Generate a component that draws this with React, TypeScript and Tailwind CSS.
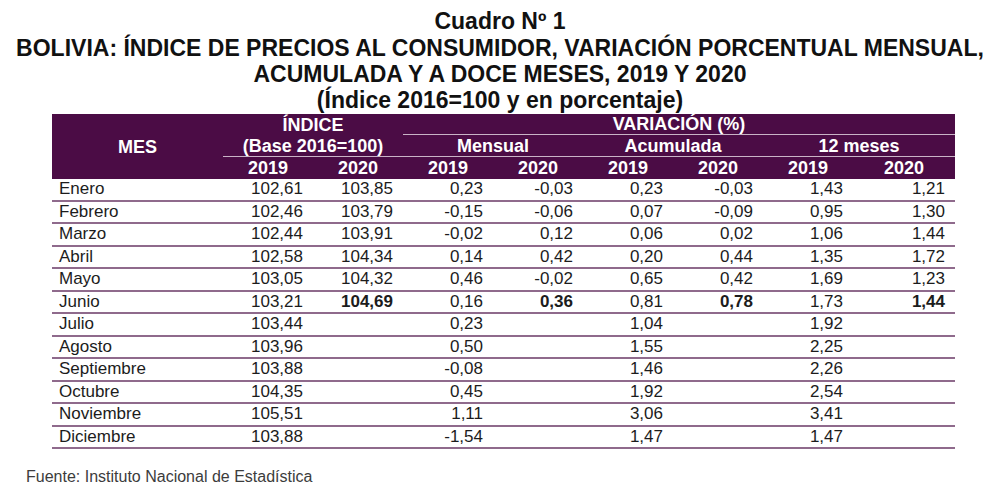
import React from "react";

type Row = {
  mes: string;
  values: string[];
  bold?: boolean;
};

const rows: Row[] = [
  { mes: "Enero", values: ["102,61", "103,85", "0,23", "-0,03", "0,23", "-0,03", "1,43", "1,21"] },
  { mes: "Febrero", values: ["102,46", "103,79", "-0,15", "-0,06", "0,07", "-0,09", "0,95", "1,30"] },
  { mes: "Marzo", values: ["102,44", "103,91", "-0,02", "0,12", "0,06", "0,02", "1,06", "1,44"] },
  { mes: "Abril", values: ["102,58", "104,34", "0,14", "0,42", "0,20", "0,44", "1,35", "1,72"] },
  { mes: "Mayo", values: ["103,05", "104,32", "0,46", "-0,02", "0,65", "0,42", "1,69", "1,23"] },
  { mes: "Junio", values: ["103,21", "104,69", "0,16", "0,36", "0,81", "0,78", "1,73", "1,44"], bold: true },
  { mes: "Julio", values: ["103,44", "", "0,23", "", "1,04", "", "1,92", ""] },
  { mes: "Agosto", values: ["103,96", "", "0,50", "", "1,55", "", "2,25", ""] },
  { mes: "Septiembre", values: ["103,88", "", "-0,08", "", "1,46", "", "2,26", ""] },
  { mes: "Octubre", values: ["104,35", "", "0,45", "", "1,92", "", "2,54", ""] },
  { mes: "Noviembre", values: ["105,51", "", "1,11", "", "3,06", "", "3,41", ""] },
  { mes: "Diciembre", values: ["103,88", "", "-1,54", "", "1,47", "", "1,47", ""] },
];

const cols = "grid grid-cols-[171px_repeat(7,90px)_102px]";

export default function App() {
  return (
    <div className="w-[1000px] h-[493px] bg-white overflow-hidden font-['Liberation_Sans',Arial,sans-serif]">
      {/* title block */}
      <div className="pt-[8px] text-center font-bold text-[23px] leading-[26px] text-[#111]">
        <div className="mb-[1px]">Cuadro Nº 1</div>
        <div>BOLIVIA: ÍNDICE DE PRECIOS AL CONSUMIDOR, VARIACIÓN PORCENTUAL MENSUAL,</div>
        <div>ACUMULADA Y A DOCE MESES, 2019 Y 2020</div>
        <div>(Índice 2016=100 y en porcentaje)</div>
      </div>

      <div className="ml-[52px] mt-[1px] w-[903px]">
        {/* header */}
        <div className={`${cols} grid-rows-[21px_22px_22px] bg-[#4b0c45] text-white font-bold text-[18px] leading-[20px]`}>
          <div className="row-span-3 flex items-center justify-center">MES</div>
          <div className="col-span-2 flex items-end justify-center">ÍNDICE</div>
          <div className="col-span-6 flex items-end justify-center border-b border-[#c9b3c6]">VARIACIÓN (%)</div>
          <div className="col-span-2 flex items-center justify-center border-b border-[#c9b3c6]">(Base 2016=100)</div>
          <div className="col-span-2 flex items-center justify-center border-b border-[#c9b3c6]">Mensual</div>
          <div className="col-span-2 flex items-center justify-center border-b border-[#c9b3c6]">Acumulada</div>
          <div className="col-span-2 flex items-center justify-center border-b border-[#c9b3c6]">12 meses</div>
          {["2019", "2020", "2019", "2020", "2019", "2020", "2019", "2020"].map((y, i) => (
            <div key={i} className="flex items-center justify-center">
              {y}
            </div>
          ))}
        </div>

        {/* body */}
        {rows.map((r) => (
          <div key={r.mes} className={`${cols} h-[22.5px] border-b-2 border-[#8f6a8c] text-[17px] leading-[20px] text-[#1c1c1c]`}>
            <div className="pl-[7px] flex items-center">{r.mes}</div>
            {r.values.map((v, i) => (
              <div
                key={i}
                className={`pr-[10px] flex items-center justify-end ${r.bold && i % 2 === 1 ? "font-bold" : ""}`}
              >
                {v}
              </div>
            ))}
          </div>
        ))}
      </div>

      <div className="ml-[26px] mt-[18px] text-[16px] leading-[20px] text-[#3c3c3c]">
        Fuente: Instituto Nacional de Estadística
      </div>
    </div>
  );
}
